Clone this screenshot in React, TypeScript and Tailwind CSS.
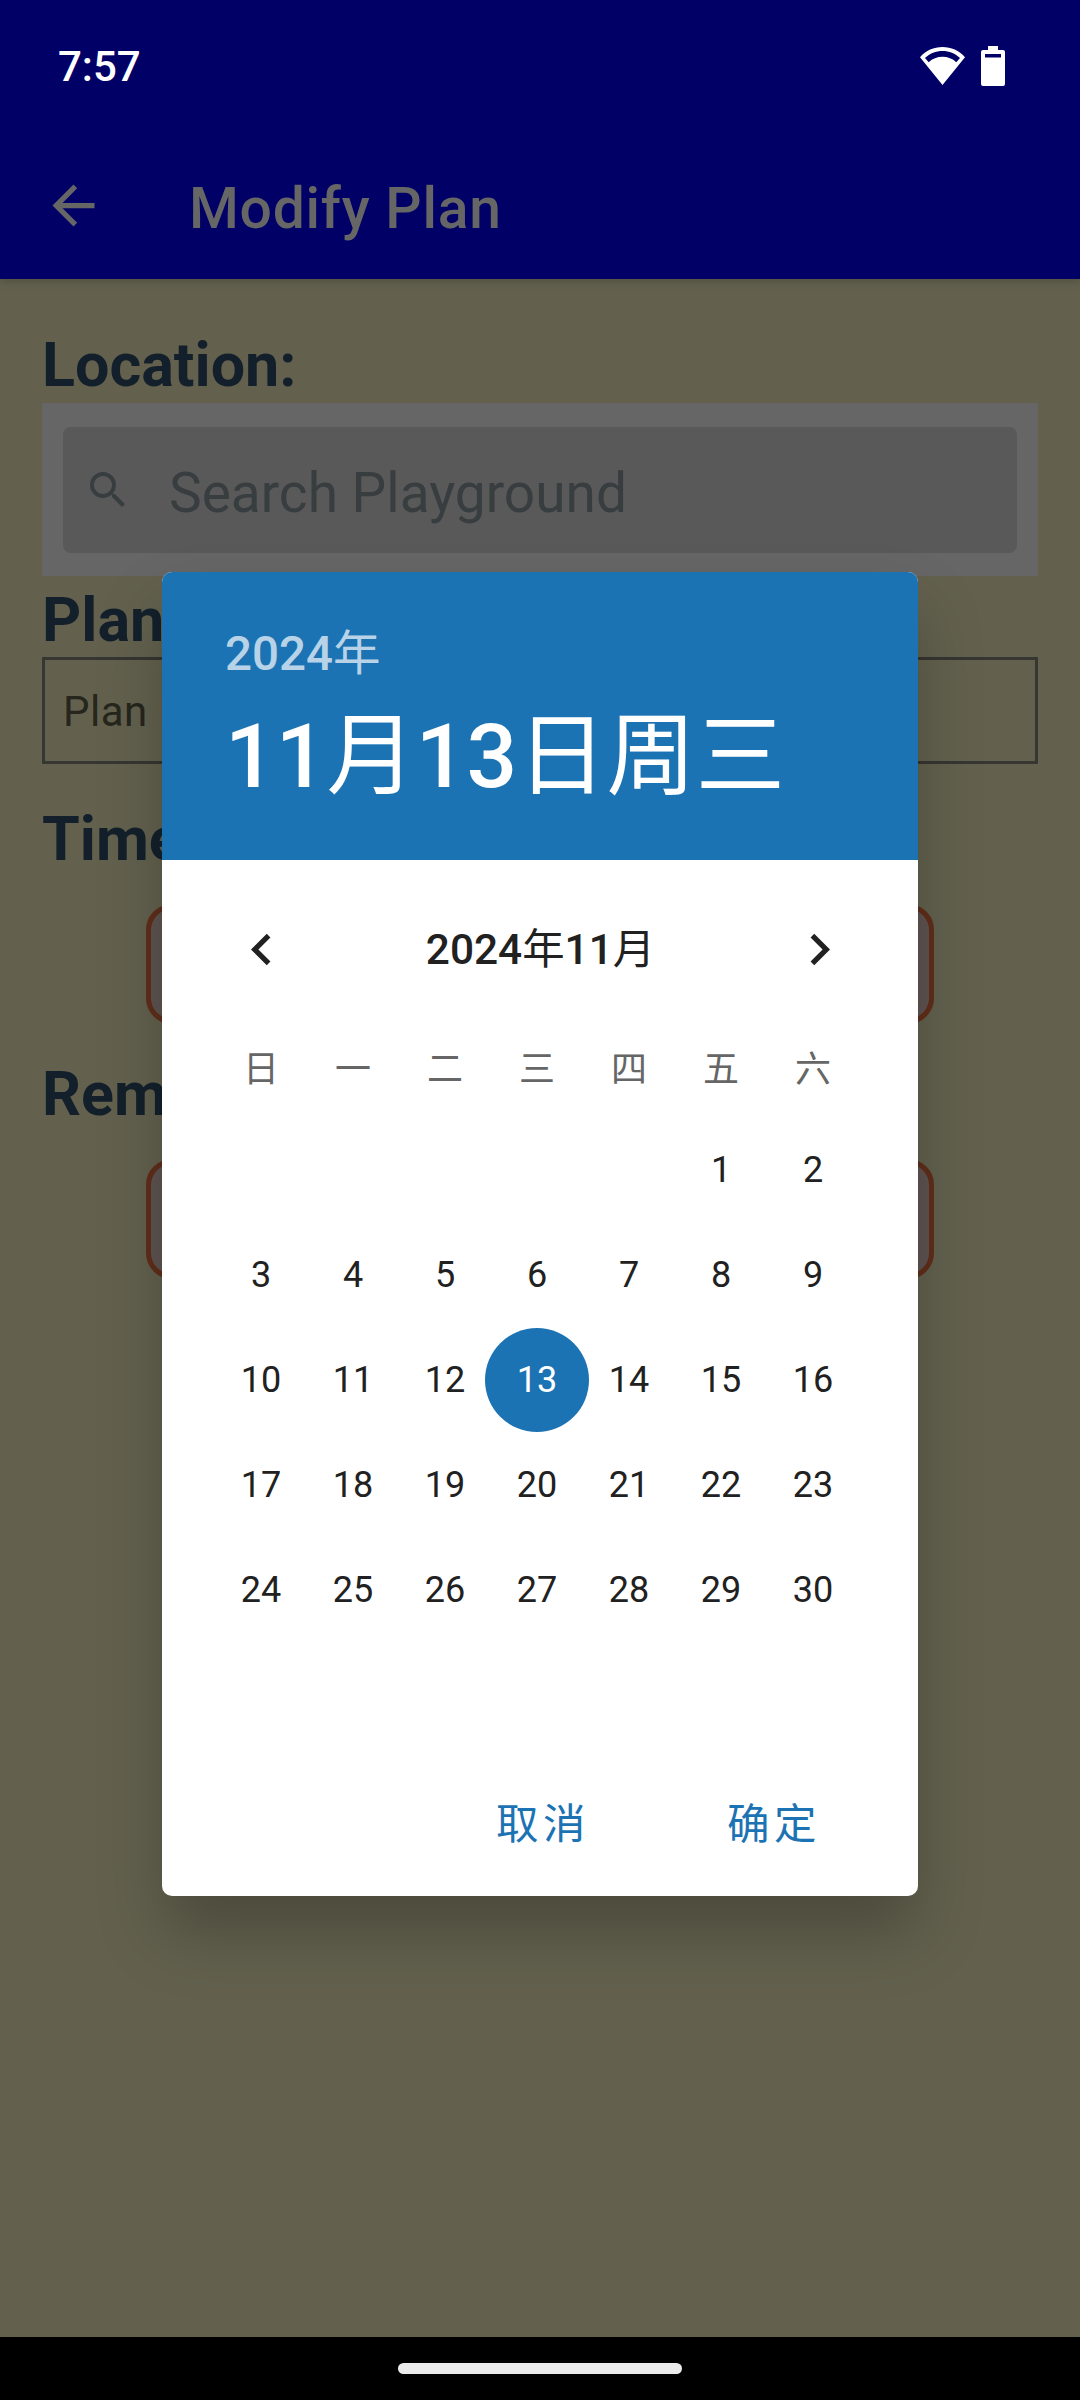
import React from 'react';

const WEEKDAYS = ['日', '一', '二', '三', '四', '五', '六'];
const DAYS = Array.from({ length: 30 }, (_, i) => i + 1);
const SELECTED = 13;

function WifiIcon() {
  return (
    <svg className="h-[38px] w-[45px]" viewBox="0 0 45 38">
      <path
        fill="#fff"
        fillRule="evenodd"
        d="M22.5 0C13.8 0 5.900 3.500 0 10.200L22.500 38L45 10.200C39.100 3.500 31.200 0 22.500 0ZM22.500 4C29.200 4 35.200 6.400 40 11L36.300 15.300C32.600 11.700 27.800 9.800 22.500 9.800C17.200 9.800 12.400 11.700 8.700 15.300L5 11C9.800 6.400 15.800 4 22.500 4Z"
      />
    </svg>
  );
}

function BatteryIcon() {
  return (
    <svg className="h-10 w-6" viewBox="0 0 24 40">
      <path
        fill="#fff"
        fillRule="evenodd"
        d="M7 0H17V4H22Q24 4 24 6V38Q24 40 22 40H2Q0 40 0 38V6Q0 4 2 4H7ZM4 8V11.600H20V8Z"
      />
    </svg>
  );
}

function Label({ children, className }: { children: React.ReactNode; className: string }) {
  return <div className={`text-[61px] font-bold whitespace-nowrap text-[#13202b] ${className}`}>{children}</div>;
}

function PickerButton({ className }: { className: string }) {
  return (
    <div
      className={`mx-[104px] h-[120px] rounded-[26px] border-[5px] border-[#612e1a] bg-[#5f5553] ${className}`}
    />
  );
}

/* Chinese characters stay at regular weight inside medium-weight numerals. */
function Han({ children }: { children: string }) {
  return <span className="font-normal">{children}</span>;
}

function Page() {
  return (
    <div className="flex h-full flex-col bg-[#63614e]">
      <header className="relative h-[279px] shrink-0 bg-[#000066] shadow-[0_3px_8px_rgba(0,0,0,0.18)]">
        <div className="flex h-[132px] items-center pr-[75px] pl-[58px]">
          <span className="pt-[2px] text-[42px] leading-[50px] font-medium text-white">7:57</span>
          <div className="ml-auto flex items-center gap-4">
            <WifiIcon />
            <BatteryIcon />
          </div>
        </div>
        <div className="flex h-[147px] items-center pl-[42px]">
          <svg className="size-[63px]" viewBox="0 0 24 24" fill="#666666">
            <path d="M20 11H7.830l5.590-5.590L12 4l-8 8 8 8 1.410-1.410L7.830 13H20v-2z" />
          </svg>
          <h1 className="ml-[84px] pt-[5px] text-[57px] leading-[67px] font-medium tracking-[0.75px] text-[#666666]">
            Modify Plan
          </h1>
        </div>
      </header>

      <main className="flex-1 px-[42px] pt-12">
        <Label className="leading-[76px]">Location:</Label>
        <div className="h-[173px] bg-[#666666] px-[21px] pt-6">
          <div className="flex h-[126px] items-center rounded-lg bg-[#595959] pl-[21px]">
            <svg className="size-12" viewBox="0 0 24 24" fill="#383d40">
              <path d="M15.500 14h-.79l-.28-.27A6.471 6.471 0 0 0 16 9.500 6.500 6.500 0 1 0 9.500 16c1.610 0 3.090-.59 4.230-1.570l.27.28v.79l5 4.990L20.490 19l-4.990-5zm-6 0C7.010 14 5 11.990 5 9.500S7.010 5 9.500 5 14 7.010 14 9.500 11.990 14 9.500 14z" />
            </svg>
            <span className="ml-[37px] pt-1.5 text-[55px] leading-[66px] text-[#383d40]">Search Playground</span>
          </div>
        </div>
        <Label className="pt-[7px] leading-[74px]">Plan</Label>
        <div className="flex h-[107px] items-center border-[3px] border-[#363632] pt-[2px] pl-[18px] text-[42px] tracking-[0.5px] text-[#26261d]">
          Plan N
        </div>
        <Label className="mt-[38px] leading-[74px]">Time</Label>
        <PickerButton className="mt-7" />
        <Label className="mt-[33px] leading-[74px]">Rem</Label>
        <PickerButton className="mt-7" />
      </main>

      <footer className="flex h-[63px] shrink-0 justify-center bg-black pt-[26px]">
        <div className="h-[11px] w-[284px] rounded-full bg-[#ececec]" />
      </footer>
    </div>
  );
}

function DatePicker() {
  return (
    <section className="absolute top-[572px] left-[162px] flex h-[1324px] w-[756px] flex-col overflow-hidden rounded-[10px] bg-white shadow-[0_38px_66px_rgba(0,0,0,0.24)]">
      <div className="h-[288px] bg-[#1c73b4] pt-[52px] pl-[63px] font-medium">
        <div className="text-[47.5px] leading-[60px] text-white/70">
          2024<Han>年</Han>
        </div>
        <div className="pt-[18px] text-[89.25px] leading-[110px] whitespace-nowrap text-white">
          11<Han>月</Han>13<Han>日周三</Han>
        </div>
      </div>

      <div className="flex h-[179px] items-center justify-between pr-[67px] pl-[68px] text-[#212121]">
        <svg className="size-[63px]" viewBox="0 0 24 24" fill="currentColor">
          <path d="M15.410 7.410L14 6l-6 6 6 6 1.410-1.410L10.830 12z" />
        </svg>
        <span className="text-[42.4px] leading-[50px] font-medium">
          2024<Han>年</Han>11<Han>月</Han>
        </span>
        <svg className="size-[63px]" viewBox="0 0 24 24" fill="currentColor">
          <path d="M10 6L8.590 7.410 13.170 12l-4.580 4.590L10 18l6-6z" />
        </svg>
      </div>

      <div className="ml-[53px] grid w-[644px] grid-cols-7 text-center text-[36px] text-[#666666]">
        {WEEKDAYS.map((d) => (
          <span key={d} className="h-[78px] leading-[62px]">
            {d}
          </span>
        ))}
      </div>

      <div className="ml-[53px] grid w-[644px] auto-rows-[105px] grid-cols-7 text-[36px] text-[#212121]">
        {DAYS.map((d) => (
          <div key={d} className={`flex items-center justify-center ${d === 1 ? 'col-start-6' : ''}`}>
            {d === SELECTED ? (
              <span className="-mx-1.5 flex size-[104px] shrink-0 items-center justify-center rounded-full bg-[#1c73b4] text-white">
                {d}
              </span>
            ) : (
              d
            )}
          </div>
        ))}
      </div>

      <div className="mt-auto flex justify-end gap-[137px] pr-[97px] pb-[40px] text-[42.5px] leading-[62px] tracking-[4.500px] text-[#1c73b4]">
        <span>取消</span>
        <span>确定</span>
      </div>
    </section>
  );
}

export default function App() {
  return (
    <div
      lang="zh-CN"
      className="relative h-[2400px] w-[1080px] overflow-hidden font-[Roboto,'Noto_Sans_CJK_SC',sans-serif]"
    >
      <Page />
      <DatePicker />
    </div>
  );
}
